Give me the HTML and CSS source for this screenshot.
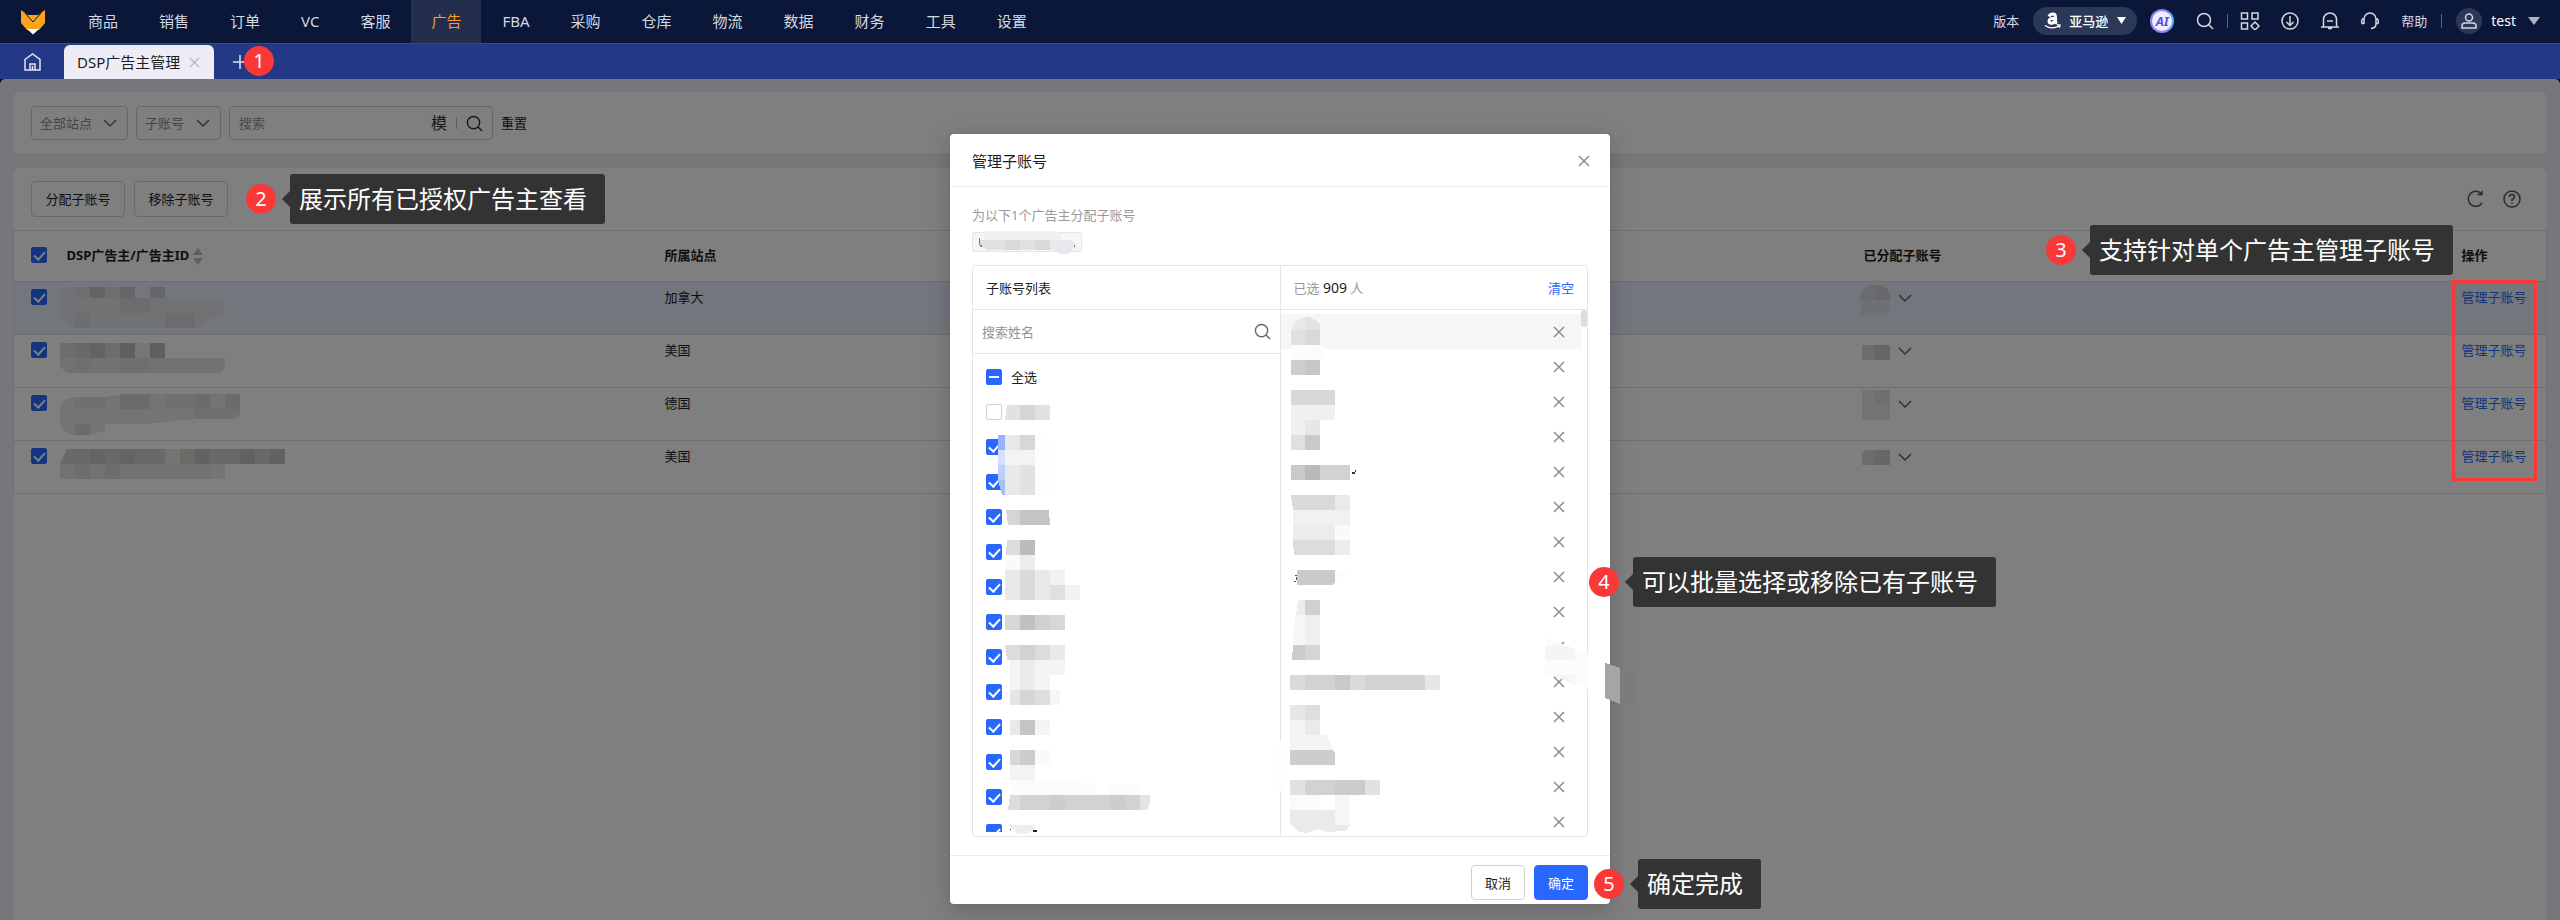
FILE: index.html
```html
<!DOCTYPE html>
<html lang="zh-CN">
<head>
    <meta charset="UTF-8">
    <meta name="viewport" content="width=device-width, initial-scale=1.0">
    <title>DSP广告主管理</title>
    <link rel="stylesheet" href="styles.css">
</head>
<body>
    <!-- shared icons -->
    <svg class="sprite" width="0" height="0" aria-hidden="true">
        <symbol id="i-search" viewBox="0 0 18 18"><circle cx="8" cy="8" r="6.5"/><path d="M12.8 12.8L17 17"/></symbol>
        <symbol id="i-close" viewBox="0 0 12 12"><path d="M1 1l10 10M11 1L1 11"/></symbol>
        <symbol id="i-down" viewBox="0 0 14 14"><path d="M1 4l6 6 6-6"/></symbol>
    </svg>

    <header class="topbar">
        <svg class="logo" viewBox="0 0 26 26">
            <path fill="#fea31e" d="M1 1l7 5h10l7-5v13l-6 7H7l-6-7z"/>
            <path fill="none" stroke="#0a1738" stroke-width="1" d="M5 4l8 9 8-9"/>
            <path fill="#fff" d="M7 20h12l-6 5.500z"/>
        </svg>
        <nav class="menu">
            <a href="#">商品</a>
            <a href="#">销售</a>
            <a href="#">订单</a>
            <a href="#">VC</a>
            <a href="#">客服</a>
            <a href="#" class="active">广告</a>
            <a href="#">FBA</a>
            <a href="#">采购</a>
            <a href="#">仓库</a>
            <a href="#">物流</a>
            <a href="#">数据</a>
            <a href="#">财务</a>
            <a href="#">工具</a>
            <a href="#">设置</a>
        </nav>
        <div class="tools">
            <a href="#" class="version">版本</a>
            <button class="platform" type="button">
                <svg width="17" height="18" viewBox="0 0 17 18"><path fill="none" stroke="#fff" stroke-width="3" d="M5 4.500Q6 2 9 2q2.500 0 2.500 3v4.500q0 1 1.500 2M11 6.200Q5 6 5 9q0 2.300 2.300 2.300T11 8.500"/><path fill="none" stroke="#fff" stroke-width="1.400" d="M1 13.500q7 4.500 14 .5M13 12.800l3 .3-.8 2.600"/></svg>
                <span>亚马逊</span>
                <svg width="9" height="7" viewBox="0 0 9 7"><path fill="#fff" d="M0 0h9L4.500 7z"/></svg>
            </button>
            <button class="ai" type="button"><span>AI</span></button>
            <button class="icon search" type="button" aria-label="搜索"><svg width="18" height="18"><use href="#i-search"/></svg></button>
            <i class="line"></i>
            <button class="icon" type="button" aria-label="应用"><svg width="20" height="18" viewBox="0 0 20 18"><path d="M1.500 1h6v6h-6zM12 1h6v6h-6zM1.500 11h6v6h-6zM15 10l4 4-4 4-4-4z"/></svg></button>
            <button class="icon" type="button" aria-label="下载"><svg width="20" height="18" viewBox="0 0 20 18"><circle cx="10" cy="9" r="8"/><path d="M10 4v9M6.500 10l3.500 3.500 3.500-3.500"/></svg></button>
            <button class="icon" type="button" aria-label="通知"><svg width="20" height="18" viewBox="0 0 20 18"><path d="M1 15h18M3.500 15V7.500a6.500 6.500 0 0 1 13 0V15M7 9h6M8 16.500h4"/></svg></button>
            <button class="icon" type="button" aria-label="客服"><svg width="20" height="18" viewBox="0 0 20 18"><path d="M4 12V7a6 6 0 0 1 12 0v5q0 4-5 4.500M4 7H2.500Q1 9 2 11.500h2M16 7h1.500Q19 9 18 11.500h-2"/></svg></button>
            <a href="#" class="help">帮助</a>
            <i class="line"></i>
            <button class="user" type="button">
                <span class="avatar"><svg width="16" height="16" viewBox="0 0 16 16"><circle cx="8" cy="4.500" r="3.500"/><path d="M1 15v-2q0-3 3-3h8q3 0 3 3v2z"/></svg></span>
                <span>test</span>
                <svg width="12" height="8" viewBox="0 0 12 8"><path fill="#aeb3c0" d="M0 0h12L6 8z"/></svg>
            </button>
        </div>
    </header>

    <div class="tabs">
        <a href="#" class="home" aria-label="首页"><svg width="17" height="18" viewBox="0 0 17 18"><path d="M1 6.500L8.500 1 16 6.500V17H1zM6 17v-6h5v6M8.500 13v4"/></svg></a>
        <div class="tab">
            <a href="#">DSP广告主管理</a>
            <button type="button" aria-label="关闭"><svg width="11" height="11"><use href="#i-close"/></svg></button>
        </div>
        <button class="add" type="button" aria-label="新增"><svg width="14" height="14" viewBox="0 0 14 14"><path d="M7 0v14M0 7h14"/></svg></button>
        <b class="num">1</b>
    </div>

    <main class="content">
        <form class="card filters">
            <label class="select site"><select aria-label="站点"><option>全部站点</option></select><svg width="14" height="14"><use href="#i-down"/></svg></label>
            <label class="select account"><select aria-label="子账号"><option>子账号</option></select><svg width="14" height="14"><use href="#i-down"/></svg></label>
            <div class="keyword">
                <input type="text" placeholder="搜索" aria-label="搜索">
                <button type="button" class="fuzzy">模</button>
                <i></i>
                <button type="button" aria-label="搜索"><svg width="17" height="17"><use href="#i-search"/></svg></button>
            </div>
            <button type="reset" class="reset">重置</button>
        </form>

        <section class="card list">
            <div class="toolbar">
                <button type="button" class="btn">分配子账号</button>
                <button type="button" class="btn">移除子账号</button>
                <div class="note note-2"><b class="num">2</b><span>展示所有已授权广告主查看</span></div>
                <div class="actions">
                    <button type="button" aria-label="刷新"><svg width="18" height="18" viewBox="0 0 18 18"><path d="M15 13A7.500 7.500 0 1 1 14 3.500M10.500 4.500H15V1"/></svg></button>
                    <button type="button" aria-label="帮助"><svg width="18" height="18" viewBox="0 0 18 18"><circle cx="9" cy="9" r="8"/><path d="M6.500 7Q6.500 4.500 9 4.500T11.500 7Q11.500 8.200 9 9.500V11M9 12.500V14"/></svg></button>
                </div>
            </div>
            <table>
                <colgroup><col class="c-check"><col class="c-name"><col class="c-site"><col class="c-sub"><col class="c-op"></colgroup>
                <thead>
                    <tr>
                        <th><input type="checkbox" checked aria-label="全选"></th>
                        <th>DSP广告主/广告主ID <svg class="sort" width="10" height="17" viewBox="0 0 10 17"><path d="M5 0l5 7H0zM0 10h10l-5 7z"/></svg></th>
                        <th>所属站点</th>
                        <th>已分配子账号</th>
                        <th>操作</th>
                    </tr>
                </thead>
                <tbody>
                    <tr class="current">
                        <td><input type="checkbox" checked aria-label="选择"></td>
                        <td><svg class="mosaic" width="230" height="44" viewBox="58 289 230 44">
                            <path fill="#e2e5ea" d="M60 300q0-9 15-12v42q-13-4-16-20z"/>
                            <path fill="#dcdee2" d="M75 289h15v11H75zM105 289h15v11h-15z"/><path fill="#c4c6ca" d="M90 289h15v11H90z"/><path fill="#cbcdd1" d="M120 289h15v11h-15zM150 289h15v11h-15z"/>
                            <path fill="#e1e4e9" d="M75 300h45v15H75zM150 300h75v20h-15l-8 10H75v-15h75z"/><path fill="#d8d9de" d="M120 300h30v15h-30zM165 315h30v15h-30z"/><path fill="#dadde1" d="M75 315h15v15H75z"/>
                        </svg></td>
                        <td>加拿大</td>
                        <td><svg class="mosaic" width="30" height="32" viewBox="1860 284 30 32"><path fill="#d6d9dd" d="M1860 300q0-14 15-15v15z"/><path fill="#cdd0d4" d="M1875 285q15 0 15 12v3h-15z"/><path fill="#dde1e7" d="M1861 300h29v15h-29z"/></svg><button type="button" class="more" aria-label="展开"><svg width="14" height="14"><use href="#i-down"/></svg></button></td>
                        <td><a href="#">管理子账号</a></td>
                    </tr>
                    <tr>
                        <td><input type="checkbox" checked aria-label="选择"></td>
                        <td><svg class="mosaic" width="230" height="44" viewBox="58 342 230 44">
                            <path fill="#dadada" d="M60 345h15v15H60zM105 345h15v15h-15z"/><path fill="#d2d2d2" d="M75 345h15v15H75z"/><path fill="#c7c6c2" d="M90 345h15v15H90z"/><path fill="#bfbfbf" d="M120 345h15v15h-15zM150 345h15v15h-15z"/><path fill="#ededed" d="M135 345h15v15h-15z"/>
                            <path fill="#e4e4e4" d="M60 360h165v8q-2 7-8 7H68q-8-4-8-8z"/><path fill="#dedede" d="M75 360h15v15H75zM120 360h30v15h-30z"/>
                        </svg></td>
                        <td>美国</td>
                        <td><svg class="mosaic" width="30" height="32" viewBox="1860 337 30 32"><path fill="#d8d8d8" d="M1862 345h13v15h-13z"/><path fill="#cdcdcd" d="M1875 345h15v15h-15z"/></svg><button type="button" class="more" aria-label="展开"><svg width="14" height="14"><use href="#i-down"/></svg></button></td>
                        <td><a href="#">管理子账号</a></td>
                    </tr>
                    <tr>
                        <td><input type="checkbox" checked aria-label="选择"></td>
                        <td><svg class="mosaic" width="230" height="44" viewBox="58 389 230 44">
                            <path fill="#e8e8e7" d="M60 405q0-10 15-12h30l20-3h115v20q-2 5-9 5h-36l-50 5H105v7l-15 4H75q-15-2-15-15z"/>
                            <path fill="#dededb" d="M75 394h30v11H75zM165 390h30v15h-30z"/><path fill="#d7d7d6" d="M120 390h30v15h-30zM195 390h15v15h-15zM225 390h15v15h-15zM75 420h15v11H75z"/><path fill="#dcdedd" d="M195 405h45v5q-2 5-9 5h-36z"/>
                        </svg></td>
                        <td>德国</td>
                        <td><svg class="mosaic" width="30" height="32" viewBox="1860 390 30 32"><path fill="#e9e9e9" d="M1862 390h28v30h-28z"/><path fill="#dfdfdf" d="M1875 390h15v15h-15z"/></svg><button type="button" class="more" aria-label="展开"><svg width="14" height="14"><use href="#i-down"/></svg></button></td>
                        <td><a href="#">管理子账号</a></td>
                    </tr>
                    <tr>
                        <td><input type="checkbox" checked aria-label="选择"></td>
                        <td><svg class="mosaic" width="230" height="44" viewBox="58 447 230 44">
                            <path fill="#d2d2d2" d="M60 465l7-15h98v15zM195 450h90v15h-90z"/><path fill="#c8c8c7" d="M90 450h15v15H90zM120 450h15v15h-15z"/><path fill="#eae9e5" d="M165 450h15v15h-15z"/><path fill="#dad7d1" d="M180 450h15v15h-15z"/><path fill="#c3c4c8" d="M195 450h15v15h-15z"/><path fill="#c2c2c2" d="M240 450h15v15h-15zM270 450h15v15h-15z"/>
                            <path fill="#e4e4e4" d="M60 465h150v15H60z"/><path fill="#dadada" d="M75 465h15v15H75zM105 465h15v15h-15z"/><path fill="#ebebeb" d="M210 465h15v15h-15z"/>
                        </svg></td>
                        <td>美国</td>
                        <td><svg class="mosaic" width="30" height="32" viewBox="1860 443 30 32"><path fill="#d8d8d8" d="M1862 453l3-3h10v15h-13z"/><path fill="#cecece" d="M1875 450h15v15h-15z"/></svg><button type="button" class="more" aria-label="展开"><svg width="14" height="14"><use href="#i-down"/></svg></button></td>
                        <td><a href="#">管理子账号</a></td>
                    </tr>
                </tbody>
            </table>
            <div class="note note-3"><b class="num">3</b><span>支持针对单个广告主管理子账号</span></div>
            <div class="frame"></div>
        </section>

        <div class="mask">
            <div class="modal" role="dialog" aria-labelledby="modal-title">
                <div class="modal-head">
                    <h2 id="modal-title">管理子账号</h2>
                    <button type="button" aria-label="关闭"><svg width="12" height="12"><use href="#i-close"/></svg></button>
                </div>
                <div class="modal-body">
                    <p>为以下1个广告主分配子账号</p>
                    <div class="tag"></div>
                    <div class="transfer">
                        <div class="side left">
                            <h3>子账号列表</h3>
                            <div class="find">
                                <input type="text" placeholder="搜索姓名" aria-label="搜索姓名">
                                <button type="button" aria-label="搜索"><svg width="17" height="17"><use href="#i-search"/></svg></button>
                            </div>
                            <div class="names">
                                <label><input type="checkbox" class="half">全选</label>
                                <label><input type="checkbox" aria-label="子账号"></label>
                                <label><input type="checkbox" checked aria-label="子账号"></label>
                                <label><input type="checkbox" checked aria-label="子账号"></label>
                                <label><input type="checkbox" checked aria-label="子账号"></label>
                                <label><input type="checkbox" checked aria-label="子账号"></label>
                                <label><input type="checkbox" checked aria-label="子账号"></label>
                                <label><input type="checkbox" checked aria-label="子账号"></label>
                                <label><input type="checkbox" checked aria-label="子账号"></label>
                                <label><input type="checkbox" checked aria-label="子账号"></label>
                                <label><input type="checkbox" checked aria-label="子账号"></label>
                                <label><input type="checkbox" checked aria-label="子账号"></label>
                                <label><input type="checkbox" checked aria-label="子账号"></label>
                                <label><input type="checkbox" checked aria-label="子账号"></label>
                            </div>
                        </div>
                        <div class="side right">
                            <h3><span>已选 <em>909</em> 人</span><button type="button">清空</button></h3>
                            <ul class="picked">
                                <li class="hover"><button type="button" aria-label="移除"><svg width="12" height="12"><use href="#i-close"/></svg></button></li>
                                <li><button type="button" aria-label="移除"><svg width="12" height="12"><use href="#i-close"/></svg></button></li>
                                <li><button type="button" aria-label="移除"><svg width="12" height="12"><use href="#i-close"/></svg></button></li>
                                <li><button type="button" aria-label="移除"><svg width="12" height="12"><use href="#i-close"/></svg></button></li>
                                <li><button type="button" aria-label="移除"><svg width="12" height="12"><use href="#i-close"/></svg></button></li>
                                <li><button type="button" aria-label="移除"><svg width="12" height="12"><use href="#i-close"/></svg></button></li>
                                <li><button type="button" aria-label="移除"><svg width="12" height="12"><use href="#i-close"/></svg></button></li>
                                <li><button type="button" aria-label="移除"><svg width="12" height="12"><use href="#i-close"/></svg></button></li>
                                <li><button type="button" aria-label="移除"><svg width="12" height="12"><use href="#i-close"/></svg></button></li>
                                <li><button type="button" aria-label="移除"><svg width="12" height="12"><use href="#i-close"/></svg></button></li>
                                <li><button type="button" aria-label="移除"><svg width="12" height="12"><use href="#i-close"/></svg></button></li>
                                <li><button type="button" aria-label="移除"><svg width="12" height="12"><use href="#i-close"/></svg></button></li>
                                <li><button type="button" aria-label="移除"><svg width="12" height="12"><use href="#i-close"/></svg></button></li>
                                <li><button type="button" aria-label="移除"><svg width="12" height="12"><use href="#i-close"/></svg></button></li>
                                <li><button type="button" aria-label="移除"><svg width="12" height="12"><use href="#i-close"/></svg></button></li>
                            </ul>
                            <i class="thumb"></i>
                        </div>
                    </div>
                </div>
                <div class="modal-foot">
                    <button type="button" class="btn">取消</button>
                    <button type="button" class="btn primary">确定</button>
                </div>

                <!-- blurred-out names -->
                <svg class="cover" width="690" height="770" viewBox="950 134 690 770" shape-rendering="crispEdges">
                    <g><path fill="#eff0f2" d="M985 231h68l8 2v7h-76z"/><path fill="#e0e1e3" d="M980 240h90l5 4-2 6-5 4h-8l-5-4H988l-8-4z"/><path fill="#d8d9db" d="M1005 240h15v10h-15zM1035 240h15v10h-15z"/><path fill="#e8e9ec" d="M1050 240h22l3 4-2 6-5 4h-8l-10-6z"/><path fill="#777" d="M979 238h1v7h-1zM980 245h2v2h-2zM1074 245h1v2h-1z"/></g>
                    <!-- left column -->
                    <path fill="#e2e2e2" d="M1007 405h43v15h-45z"/><path fill="#d5d5d5" d="M1020 405h15v15h-15z"/>
                    <path fill="#97b3ff" d="M998 435h7v15h-7z"/><path fill="#e8e8e8" d="M1005 435h15v15h-15z"/><path fill="#d7d7d7" d="M1020 435h15v15h-15z"/><path fill="#fdfdfd" d="M1035 435h14v60h-14z"/>
                    <path fill="#d3e0ff" d="M998 450h7v15h-7z"/><path fill="#f3f3f3" d="M1005 450h30v15h-30z"/>
                    <path fill="#bccfff" d="M998 465h7v15h-7z"/><path fill="#e9e9e9" d="M1005 465h15v30h-15z"/><path fill="#e2e2e2" d="M1020 465h15v30h-15z"/>
                    <path fill="#a6bfff" d="M998 480h7v15h-3z"/>
                    <path fill="#d5d5d5" d="M1006 510h14v15h-12z"/><path fill="#c5c5c5" d="M1020 510h29l1 15h-30z"/>
                    <path fill="#dcdcdc" d="M1007 540h13v15h-14z"/><path fill="#bcbcbc" d="M1020 540h15v15h-15z"/><path fill="#fafafa" d="M1005 555h15v15h-15z"/><path fill="#ededed" d="M1020 555h15v15h-15z"/>
                    <path fill="#e8e8e8" d="M1005 570h45v30h-45z"/><path fill="#dadada" d="M1020 570h15v30h-15z"/><path fill="#f2f2f2" d="M1050 570h15v15h15v15h-30z"/><path fill="#e0e0e0" d="M1050 585h15v15h-15z"/>
                    <path fill="#d7d7d7" d="M1005 615h60v15h-60z"/><path fill="#c1c1c1" d="M1020 615h15v15h-15z"/><path fill="#d0d0d0" d="M1035 615h15v15h-15z"/>
                    <path fill="#dcdcdc" d="M1005 645h45v15h-43z"/><path fill="#d2d2d2" d="M1020 645h15v15h-15z"/><path fill="#e9e9e9" d="M1050 645h15v15h-15z"/>
                    <path fill="#f4f4f4" d="M1010 660h55v15h-15v15h-40z"/><path fill="#ebebeb" d="M1020 660h15v30h-15z"/>
                    <path fill="#e5e5e5" d="M1010 690h10v15h-10z"/><path fill="#d6d6d6" d="M1020 690h15v15h-15z"/><path fill="#dedede" d="M1035 690h15v15h-15z"/><path fill="#f6f6f6" d="M1050 690h10v15h-10z"/>
                    <path fill="#e9e9e9" d="M1010 720h10v15h-10z"/><path fill="#c4c4c4" d="M1020 720h15v15h-15z"/><path fill="#f4f4f4" d="M1035 720h15v15h-15z"/>
                    <path fill="#d8d8d8" d="M1010 750h10v15h-10z"/><path fill="#ccc" d="M1020 750h15v15h-15z"/><path fill="#fafafa" d="M1035 750h15v15h-15z"/><path fill="#f3f3f3" d="M1010 765h25v15h-25z"/>
                    <path fill="#fcfcfc" d="M1010 780h67l3 3h15v12h-85zM1110 784h30v11h-30z"/><path fill="#dcdcdc" d="M1010 795h10v15h-12z"/><path fill="#d2d2d2" d="M1020 795h120v15h-120z"/><path fill="#cdcdcd" d="M1050 795h15v15h-15zM1110 795h15v15h-15z"/><path fill="#e4e4e4" d="M1140 795h10v8l-3 7h-7z"/>
                    <path fill="#eee" d="M1008 825h27v5l-10 4h-7z"/><path fill="#222" d="M1033 830h4v2h-4zM1010 829h1v1h-1z"/>
                    <!-- right column -->
                    <path fill="#fefefe" d="M1278 741h6v50h-6z"/>
                    <path fill="#e8e8e8" d="M1292 330q2-12 13-13v13z"/><path fill="#e2e2e2" d="M1305 317q10 0 15 8v5h-15z"/><path fill="#e0e0e0" d="M1291 330h14v15h-14z"/><path fill="#d9d9d9" d="M1305 330h15v15h-15z"/><path fill="#fcfcfc" d="M1291 345h32v15h-32z"/><path fill="#cecece" d="M1291 360h14v15h-14z"/><path fill="#c7c7c7" d="M1305 360h15v15h-15z"/>
                    <path fill="#d8d8d8" d="M1291 390h44v15h-44z"/><path fill="#f0f0f0" d="M1291 405h44v15h-15v15h-29z"/><path fill="#e7e7e7" d="M1305 420h15v15h-15z"/><path fill="#e0e0e0" d="M1291 435h14v15h-14z"/><path fill="#c9c9c9" d="M1305 435h15v15h-15z"/>
                    <path fill="#c9c9c9" d="M1291 465h14v15h-14z"/><path fill="#bababa" d="M1305 465h15v15h-15z"/><path fill="#d2d2d2" d="M1320 465h30v15h-30z"/><path fill="#333" d="M1352 472h3v2h-3zM1355 470h1v2h-1z"/>
                    <path fill="#d9d9d9" d="M1291 495h44v15h-42z"/><path fill="#eaeaea" d="M1335 495h15v15h-15z"/><path fill="#f1f1f1" d="M1293 510h57v15h-57z"/><path fill="#ececec" d="M1293 525h42v15h-42z"/><path fill="#fafafa" d="M1335 525h15v15h-15z"/><path fill="#dcdcdc" d="M1293 540h42v15h-41z"/><path fill="#ececec" d="M1335 540h15v15h-15z"/>
                    <path fill="#cacaca" d="M1297 570h38v13l-3 2h-35z"/><path fill="#fcfcfc" d="M1335 570h15l-15 12z"/><path fill="#555" d="M1295 575h2v1h-2zM1296 577h1v3h-1zM1294 581h2v1h-2z"/>
                    <path fill="#ededed" d="M1298 600h7v15h-9z"/><path fill="#d0d0d0" d="M1305 600h15v15h-15z"/><path fill="#f6f6f6" d="M1295 615h10v30h-12z"/><path fill="#efefef" d="M1305 615h15v30h-15z"/><path fill="#cbcbcb" d="M1293 645h12v15h-13z"/><path fill="#d5d5d5" d="M1305 645h15v15h-15z"/>
                    <path fill="#d2d2d2" d="M1290 675h135v15h-135z"/><path fill="#dadada" d="M1290 675h15v15h-15zM1350 675h15v15h-15z"/><path fill="#c9c9c9" d="M1335 675h15v15h-15z"/><path fill="#e7e7e7" d="M1425 675h15v15h-15z"/>
                    <path fill="#e6e6e6" d="M1290 705h15v15h-15z"/><path fill="#dedede" d="M1305 705h15v15h-15z"/><path fill="#f4f4f4" d="M1290 720h15v15h21l7 14v1h-43z"/><path fill="#eaeaea" d="M1305 720h15v15h-15z"/><path fill="#cdcdcd" d="M1290 750h43l2 3v12h-45z"/>
                    <path fill="#d2d2d2" d="M1305 780h30v15h-30z"/><path fill="#cbcbcb" d="M1335 780h30v15h-30z"/><path fill="#e2e2e2" d="M1290 780h15v15h-15zM1365 780h15v15h-15z"/><path fill="#fbfbfb" d="M1290 795h30v15h-30z"/><path fill="#f6f6f6" d="M1335 795h15v30h-15z"/><path fill="#eaeaea" d="M1290 810h45v15h15l-4 6-20 1-8-3-10 4-10-1-8-8z"/>
                    <!-- brush strokes over the scrollbar side -->
                    <path fill="#fcfcfc" d="M1545 637l45 18v35l-15-6-23-9h-7z"/><path fill="#f5f5f5" d="M1545 645h20l10 4v11h-30zM1552 675h23v10z"/>
                    <path fill="#a5a5a5" d="M1605 663l15 5v36l-15-6z"/><path fill="#7c7c7c" d="M1620 669l14 5v35l-14-6z"/>
                </svg>

                <div class="note note-4"><b class="num">4</b><span>可以批量选择或移除已有子账号</span></div>
                <div class="note note-5"><b class="num">5</b><span>确定完成</span></div>
            </div>
        </div>
    </main>
</body>
</html>
```
FILE: styles.css
```css
* {
    box-sizing: border-box;
}
body {
    margin: 0;
    min-height: 100vh;
    display: flex;
    flex-direction: column;
    background: #0a1738;
    color: #1d1d1f;
    font-family: "Noto Sans", "Noto Sans CJK SC", sans-serif;
    font-size: 13px;
    line-height: 20px;
}
a {
    color: inherit;
    text-decoration: none;
}
button, input, select {
    font: inherit;
    color: inherit;
    background: none;
    border: none;
    padding: 0;
    margin: 0;
    outline: none;
}
button {
    cursor: pointer;
}
svg {
    display: block;
    fill: none;
    stroke: none;
}
button svg, .select svg, .home svg {
    stroke: currentColor;
    stroke-width: 1.5;
}
.sprite {
    position: absolute;
}

/* Top bar */
.topbar {
    display: flex;
    align-items: center;
    height: 43px;
    padding: 0 20px;
    color: #d5d8e0;
    white-space: nowrap;
}
.logo {
    width: 26px;
    height: 26px;
    margin-right: 22px;
}
.menu {
    display: flex;
    gap: 1px;
    height: 100%;
}
.menu a {
    padding: 0 20px;
    text-align: center;
    font-size: 15px;
    line-height: 42px;
}
.menu .active {
    background: #232e4c;
    color: #fb9a2c;
}
.tools {
    display: flex;
    align-items: center;
    margin-left: auto;
    padding-bottom: 2px;
}
.platform {
    display: flex;
    align-items: center;
    height: 28px;
    margin: 0 13px 0 14px;
    padding: 0 11px;
    border-radius: 14px;
    background: #2c3857;
    color: #fff;
    font-weight: 500;
}
.platform span {
    margin: 0 9px 0 8px;
}
.platform svg {
    stroke: none;
}
.ai {
    width: 24px;
    height: 24px;
    border: 2px solid #8f84f5;
    border-right-color: #46b6fb;
    border-radius: 50%;
    background: #f1efff;
    color: #5b50ea;
    font-size: 13px;
    font-style: italic;
    font-weight: 700;
    line-height: 20px;
}
.icon {
    margin-right: 20px;
}
.icon.search {
    margin: 0 13px 0 22px;
}
.line {
    width: 1px;
    height: 14px;
    margin-right: 12px;
    background: #5b647c;
}
.help {
    margin: 0 14px 0 1px;
}
.user {
    display: flex;
    align-items: center;
    gap: 9px;
    margin-left: 2px;
    color: #fff;
    font-size: 14px;
}
.user > svg {
    margin-left: 3px;
    stroke: none;
}
.avatar {
    display: grid;
    place-items: center;
    width: 26px;
    height: 26px;
    border-radius: 50%;
    background: #2c3857;
    color: #d5d8e0;
}

/* Page tabs */
.tabs {
    position: relative;
    display: flex;
    align-items: center;
    height: 36px;
    padding-left: 24px;
    border-top: 1px solid #3448a0;
    background: #243985;
    color: #dfe2f0;
}
.tab {
    position: relative;
    display: flex;
    align-items: center;
    gap: 9px;
    align-self: flex-end;
    height: 34px;
    margin: 0 19px 0 23px;
    padding: 0 14px 0 13px;
    border-radius: 6px 6px 0 0;
    background: #eeedf7;
    color: #1d1d1f;
    font-size: 14px;
}
.tab a {
    font-size: 15px;
}
.tab button {
    color: #b6bbc9;
}
.num {
    display: grid;
    place-items: center;
    flex: none;
    width: 30px;
    height: 30px;
    border-radius: 50%;
    background: #fb3838;
    color: #fff;
    font-size: 20px;
    font-weight: 400;
}
.tabs .num {
    position: absolute;
    left: 244px;
    top: 2px;
}

/* Content */
.content {
    position: relative;
    flex: 1;
    display: flex;
    flex-direction: column;
    gap: 14px;
    padding: 13px 13px 0;
    border-radius: 6px 6px 0 0;
    background: #eeedf7;
}
.card {
    border-radius: 6px;
    background: #fff;
    box-shadow: 0 1px 0 #e2e2e6;
}
.filters {
    display: flex;
    align-items: center;
    gap: 8px;
    padding: 14px 18px;
    color: #333;
}
.select {
    position: relative;
    display: flex;
    height: 34px;
    border: 1px solid #cfcfd4;
    border-radius: 4px;
}
.select select {
    width: 100%;
    padding: 0 8px;
    appearance: none;
    color: #8a8a8e;
}
.select svg {
    position: absolute;
    right: 10px;
    top: 9px;
    color: #66666a;
}
.site {
    width: 97px;
}
.account {
    width: 85px;
}
.keyword {
    display: flex;
    align-items: center;
    gap: 9px;
    width: 264px;
    height: 34px;
    padding: 0 9px;
    border: 1px solid #cfcfd4;
    border-radius: 4px;
}
.keyword input {
    flex: 1;
    min-width: 0;
}
::placeholder {
    color: #929296;
    opacity: 1;
}
.keyword i {
    width: 1px;
    height: 12px;
    background: #bbb;
}
.fuzzy {
    font-size: 16px;
}
.reset {
    color: #1d1d1f;
}
.btn {
    height: 36px;
    padding: 0 13px;
    border: 1px solid #cfd2d8;
    border-radius: 4px;
}
.list {
    position: relative;
    flex: 1;
    border-radius: 6px 6px 0 0;
}
.toolbar {
    display: flex;
    align-items: center;
    gap: 9px;
    padding: 13px 18px;
}
.toolbar .btn {
    width: 94px;
}
.actions {
    display: flex;
    gap: 18px;
    margin: 0 8px 0 auto;
    color: #555;
}

/* Table */
table {
    width: 100%;
    table-layout: fixed;
    border-collapse: collapse;
    border: 1px solid #e0e0e4;
}
.c-check {
    width: 41px;
}
.c-name, .c-sub {
    width: 598px;
}
.c-op {
    width: 97px;
}
th, td {
    padding: 0 12px;
    border-bottom: 1px solid #dfdfe3;
    text-align: left;
    vertical-align: top;
}
th:first-child, td:first-child {
    padding-left: 17px;
    padding-right: 0;
}
th {
    height: 51px;
    padding-bottom: 2px;
    vertical-align: middle;
    font-weight: 700;
}
td {
    height: 53px;
    padding-top: 5px;
}
td:first-child {
    padding-top: 7px;
}
.current {
    background: #e6eefa;
}
.sort {
    display: inline-block;
    vertical-align: middle;
    fill: #bdbdc2;
}
.mosaic {
    display: inline-block;
    vertical-align: top;
    margin-left: -9px;
    shape-rendering: crispEdges;
}
td:nth-child(4) .mosaic {
    margin: -3px 8px 0 -4px;
}
.more {
    vertical-align: top;
    margin-top: 4px;
    color: #666;
}
td a {
    color: #2968ff;
}
input[type="checkbox"] {
    display: block;
    position: relative;
    flex: none;
    width: 16px;
    height: 16px;
    appearance: none;
    border: 1px solid #cdd0d8;
    border-radius: 2px;
    background: #fff;
}
input[type="checkbox"]:checked, input.half {
    border-color: #2968ff;
    background: #2968ff;
}
input[type="checkbox"]:checked::after {
    content: "";
    position: absolute;
    left: 4px;
    top: 1px;
    width: 5px;
    height: 9px;
    border: solid #fff;
    border-width: 0 2px 2px 0;
    transform: rotate(42deg);
}
input.half::after {
    content: "";
    position: absolute;
    left: 2px;
    top: 6px;
    width: 10px;
    height: 2px;
    background: #fff;
}
.frame {
    position: absolute;
    z-index: 3;
    right: 10px;
    top: 112px;
    width: 85px;
    height: 201px;
    border: 3px solid #fb3838;
}

/* Step notes */
.note {
    position: absolute;
    z-index: 3;
    display: flex;
    align-items: center;
    gap: 14px;
    white-space: nowrap;
}
.note span {
    position: relative;
    padding: 0 18px 0 9px;
    border-radius: 3px;
    background: #333;
    color: #fff;
    font-size: 24px;
    line-height: 50px;
}
.note span::before {
    content: "";
    position: absolute;
    left: -8px;
    top: 17px;
    border: solid transparent;
    border-width: 8px 8px 8px 0;
    border-right-color: #333;
}
.note-2 {
    left: 233px;
    top: 6px;
}
.note-3 {
    right: 94px;
    top: 57px;
}
.note-4 {
    left: 639px;
    top: 423px;
}
.note-5 {
    left: 644px;
    bottom: -5px;
}

/* Dialog */
.mask {
    position: absolute;
    z-index: 2;
    inset: 0;
    display: flex;
    justify-content: center;
    align-items: flex-start;
    padding-top: 55px;
    border-radius: 6px 6px 0 0;
    background: rgba(0, 0, 0, 0.5);
}
.modal {
    position: relative;
    width: 660px;
    border-radius: 4px;
    background: #fff;
    box-shadow: 0 6px 24px rgba(0, 0, 0, 0.2);
}
.modal-head {
    display: flex;
    justify-content: space-between;
    align-items: center;
    height: 53px;
    padding: 2px 20px 0 22px;
    border-bottom: 1px solid #ebebed;
}
.modal-head h2 {
    margin: 0;
    font-size: 15px;
    font-weight: 400;
}
.modal-head button, .picked button {
    color: #8e8e90;
}
.modal-body {
    padding: 18px 22px;
}
.modal-body p {
    margin: 0;
    color: #9a9a9c;
}
.tag {
    width: 110px;
    height: 20px;
    margin: 7px 0 13px;
    border: 1px solid #e2e5ed;
    border-radius: 2px;
    background: #f4f5f8;
}
.transfer {
    display: flex;
    height: 572px;
    border: 1px solid #e3e5ea;
    border-radius: 4px;
}
.side {
    position: relative;
    flex: 1;
    display: flex;
    flex-direction: column;
    min-width: 0;
}
.left {
    border-right: 1px solid #e3e5ea;
}
.side h3 {
    display: flex;
    justify-content: space-between;
    align-items: center;
    flex: none;
    height: 44px;
    margin: 0;
    padding: 0 13px;
    border-bottom: 1px solid #e3e5ea;
    font-size: 13px;
    font-weight: 400;
}
.side h3 span {
    color: #9a9a9c;
}
.side h3 em {
    color: #1d1d1f;
    font-size: 14px;
    font-style: normal;
}
.side h3 button {
    color: #2968ff;
}
.find {
    display: flex;
    align-items: center;
    flex: none;
    height: 44px;
    padding: 0 9px;
    border-bottom: 1px solid #e3e5ea;
}
.find input {
    flex: 1;
}
.find button {
    color: #666;
}
.names {
    flex: 1;
    overflow: hidden;
    margin-bottom: 4px;
    padding: 5px 13px 0;
}
.names label {
    display: flex;
    align-items: center;
    gap: 9px;
    height: 35px;
}
.picked {
    flex: 1;
    display: grid;
    grid-auto-rows: 35px;
    align-content: start;
    overflow: hidden;
    margin: 0 6px 0 0;
    padding: 4px 0 0;
    list-style: none;
}
.picked li {
    display: flex;
    justify-content: flex-end;
    align-items: center;
    padding-right: 16px;
}
.picked .hover {
    background: #f6f6f7;
}
.thumb {
    position: absolute;
    right: 0;
    top: 44px;
    width: 6px;
    height: 17px;
    border-radius: 3px;
    background: #dcdde1;
}
.modal-foot {
    display: flex;
    justify-content: flex-end;
    gap: 9px;
    padding: 9px 22px 4px;
    border-top: 1px solid #ebebed;
}
.modal-foot .btn {
    height: 35px;
}
.modal-foot .primary {
    border-color: #2968ff;
    background: #2968ff;
    color: #fff;
}
.cover {
    position: absolute;
    left: 0;
    top: 0;
    pointer-events: none;
}
```
